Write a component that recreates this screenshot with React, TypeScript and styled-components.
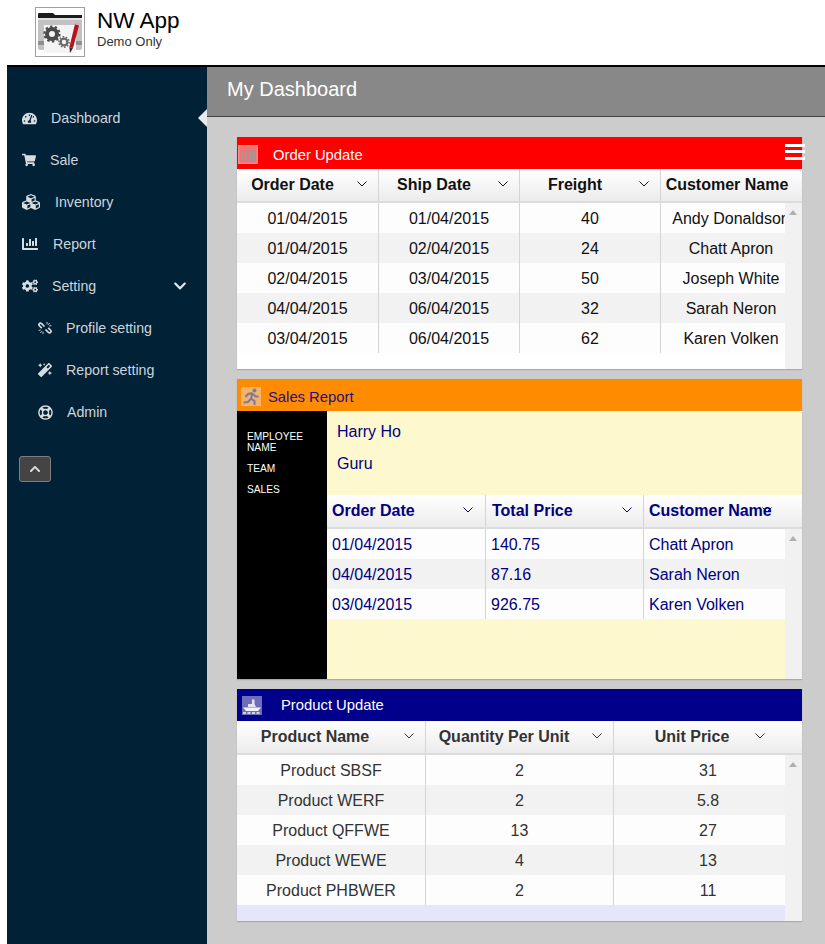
import { FC, ReactNode } from "react"
import styled, { createGlobalStyle } from "styled-components"
import { FaTachometerAlt, FaShoppingCart, FaCubes, FaChartBar, FaCogs, FaChevronDown, FaChevronUp, FaMagic, FaRegLifeRing } from "react-icons/fa"

const GlobalStyle = createGlobalStyle`
  html, body {
    margin: 0;
    padding: 0;
    background: #fff;
    font-family: "Liberation Sans", Arial, sans-serif;
  }
  * { box-sizing: border-box; }
`

const Page = styled.div`
  width: 825px;
  height: 944px;
  overflow: hidden;
`

const Header = styled.header`
  height: 67px;
  margin-left: 7px;
  padding: 7px 0 0 28px;
  display: flex;
  gap: 12px;
  border-bottom: 2px solid #000;
`

const LogoBox = styled.div`
  width: 50px;
  height: 50px;
  border: 1px solid #a0a0a0;
`

const Brand = styled.div`
  display: flex;
  flex-direction: column;
  padding-top: 2px;
`

const BrandName = styled.div`
  font-size: 22.5px;
  line-height: 24px;
  color: #000;
`

const BrandSub = styled.div`
  font-size: 13px;
  line-height: 18px;
  color: #333;
`

const Body = styled.div`
  display: flex;
  margin-left: 7px;
  height: 877px;
`

const Sidebar = styled.nav`
  position: relative;
  width: 200px;
  flex: none;
  background: #012137;
  padding-top: 30px;
`

const NavRow = styled.div<{ $sub?: boolean; $gap: number }>`
  position: relative;
  height: 42px;
  display: flex;
  align-items: center;
  padding-left: ${({ $sub }) => ($sub ? 31 : 15)}px;
  gap: ${({ $gap }) => $gap}px;
  color: #cfd4d8;
  font-size: 14.2px;
`

const NavIcon = styled.span<{ $w: number }>`
  width: ${({ $w }) => $w}px;
  flex: none;
  display: flex;
  justify-content: center;
  font-size: ${({ $w }) => $w}px;
  color: #d8dcdf;
`

const NavCaret = styled.span`
  position: absolute;
  left: 166px;
  top: 14px;
  font-size: 14px;
  color: #e4e7e9;
  display: flex;
`

const ActiveNotch = styled.span`
  position: absolute;
  right: 0;
  top: 12px;
  width: 0;
  height: 0;
  border-top: 9px solid transparent;
  border-bottom: 9px solid transparent;
  border-right: 9px solid #e8eaec;
`

const CollapseButton = styled.button`
  margin: 23px 0 0 12px;
  width: 32px;
  height: 26px;
  padding: 0;
  background: #444;
  border: 1px solid #7f7f7f;
  border-radius: 3px;
  color: #ddd;
  font-size: 12px;
  display: flex;
  align-items: center;
  justify-content: center;
`

const Main = styled.main`
  flex: 1;
  background: #ccc;
  min-width: 0;
`

const TitleBar = styled.div`
  height: 50px;
  background: #888;
  border-bottom: 1px solid #444;
  padding-left: 20px;
  color: #fff;
  font-size: 20px;
  line-height: 44px;
`

const Content = styled.div`
  padding: 20px 23px 0 30px;
  display: flex;
  flex-direction: column;
  gap: 10px;
`

const Card = styled.section<{ $h: number }>`
  height: ${({ $h }) => $h}px;
  background: #fff;
  display: flex;
  flex-direction: column;
  box-shadow: 0 1px 1px #aaa;
`

const CardHead = styled.div<{ $bg: string; $fg: string; $pad: number; $gap: number; $top: number }>`
  position: relative;
  height: 32px;
  flex: none;
  display: flex;
  align-items: center;
  gap: ${({ $gap }) => $gap}px;
  padding: ${({ $top }) => $top}px 0 0 ${({ $pad }) => $pad}px;
  background: ${({ $bg }) => $bg};
  color: ${({ $fg }) => $fg};
  font-size: 14.8px;
`

const Burger = styled.span`
  position: absolute;
  right: -3px;
  top: 7px;
  width: 20px;
  height: 16px;
  border-top: 3px solid #fff;
  border-bottom: 3px solid #fff;
  &::before {
    content: "";
    display: block;
    height: 3px;
    margin-top: 3px;
    background: #fff;
  }
`

const GridWrap = styled.div<{ $color: string; $fill: string }>`
  position: relative;
  flex: 1;
  min-height: 0;
  display: flex;
  flex-direction: column;
  color: ${({ $color }) => $color};
  background: ${({ $fill }) => $fill};
`

const HeadRow = styled.div<{ $cols: string }>`
  height: 34px;
  flex: none;
  display: grid;
  grid-template-columns: ${({ $cols }) => $cols};
  background: linear-gradient(#fff, #ececec);
  border-bottom: 2px solid #dcdcdc;
`

const HeadCell = styled.div<{ $align: string; $pl: number; $pr: number }>`
  position: relative;
  height: 32px;
  line-height: 32px;
  font-size: 16px;
  font-weight: bold;
  text-align: ${({ $align }) => $align};
  white-space: nowrap;
  padding: 0 ${({ $pr }) => $pr}px 0 ${({ $pl }) => $pl}px;
  border-right: 1px solid #d4d4d4;
  &:last-child { border-right: none; }
`

const Caret = styled.svg<{ $right: number }>`
  position: absolute;
  right: ${({ $right }) => $right}px;
  top: 12px;
  width: 10px;
  height: 6px;
`

const Rows = styled.div`
  flex: 1;
  min-height: 0;
  display: flex;
  flex-direction: column;
  margin-right: 17px;
  overflow: hidden;
`

const Row = styled.div<{ $cols: string; $odd: boolean }>`
  height: 30px;
  flex: none;
  display: grid;
  grid-template-columns: ${({ $cols }) => $cols};
  background: ${({ $odd }) => ($odd ? "#f2f2f2" : "#fdfdfd")};
`

const Cell = styled.div<{ $align: string }>`
  height: 30px;
  line-height: 32px;
  font-size: 16px;
  text-align: ${({ $align }) => $align};
  white-space: nowrap;
  overflow: hidden;
  padding: 0 ${({ $align }) => ($align === "left" ? 5 : 0)}px;
  border-right: 1px solid #d4d4d4;
  &:last-child { border-right: none; }
`

const Scrollbar = styled.div`
  position: absolute;
  right: 0;
  top: 34px;
  bottom: 0;
  width: 17px;
  background: #f1f1f1;
  &::before {
    content: "";
    position: absolute;
    left: 4px;
    top: 7px;
    border-left: 4px solid transparent;
    border-right: 4px solid transparent;
    border-bottom: 5px solid #b0b0b0;
  }
`

const SalesBody = styled.div`
  flex: 1;
  min-height: 0;
  display: flex;
`

const LabelColumn = styled.div`
  width: 90px;
  flex: none;
  background: #000;
  color: #fff;
  font-size: 10.2px;
  padding: 20px 10px 0;
`

const LabelItem = styled.div`
  line-height: 11px;
  margin-bottom: 10px;
`

const SalesMain = styled.div`
  flex: 1;
  min-width: 0;
  display: flex;
  flex-direction: column;
  background: #fef8ce;
`

const Facts = styled.div`
  height: 84px;
  flex: none;
  padding: 5px 10px 0;
  color: #000080;
  font-size: 16px;
`

const Fact = styled.div`
  height: 32px;
  line-height: 32px;
`

const SmallIcon = styled.svg`
  width: 20px;
  height: 19px;
  flex: none;
  display: block;
`

interface HeadDef {
  label: string
  caret?: number
  pl?: number
  pr?: number
}

interface GridProps {
  cols: string
  rowCols: string
  heads: HeadDef[]
  rows: string[][]
  align: string
  color: string
  fill: string
}

const Grid: FC<GridProps> = ({ cols, rowCols, heads, rows, align, color, fill }) => (
  <GridWrap $color={color} $fill={fill}>
    <HeadRow $cols={cols}>
      {heads.map((h) => (
        <HeadCell key={h.label} $align={align} $pl={h.pl ?? 5} $pr={h.pr ?? 5}>
          {h.label}
          {h.caret !== undefined && (
            <Caret $right={h.caret} viewBox="0 0 10 6">
              <path d="M0.5 0.5 L5 5 L9.5 0.5" fill="none" stroke="currentColor" strokeWidth="1" />
            </Caret>
          )}
        </HeadCell>
      ))}
    </HeadRow>
    <Rows>
      {rows.map((r, i) => (
        <Row key={r[0] + i} $cols={rowCols} $odd={i % 2 === 1}>
          {r.map((c, j) => (
            <Cell key={j} $align={align}>
              {c}
            </Cell>
          ))}
        </Row>
      ))}
    </Rows>
    <Scrollbar />
  </GridWrap>
)

const LogoIcon = () => (
  <svg width="48" height="48" viewBox="0 0 48 48">
    <path d="M2 10 L2 6 Q2 5 3 5 L17 5 L19 7 L46 7 L46 10 Z" fill="#1c1c1c" />
    <rect x="2" y="10" width="44" height="32" rx="2" fill="#c2c2c2" />
    <rect x="2" y="10" width="44" height="2" fill="#e2e2e2" />
    <rect x="8" y="17" width="32" height="28" fill="#f4f4f4" />
    <rect x="2" y="33" width="6" height="4" fill="#8f8f8f" />
    <rect x="40" y="33" width="6" height="4" fill="#8f8f8f" />
    <circle cx="16" cy="26" r="5" fill="none" stroke="#4a4a4a" strokeWidth="4" />
    <circle cx="16" cy="26" r="7.6" fill="none" stroke="#4a4a4a" strokeWidth="2" strokeDasharray="2.4 2.4" />
    <circle cx="28" cy="34" r="3.4" fill="none" stroke="#6a6a6a" strokeWidth="2.4" />
    <circle cx="28" cy="34" r="5.2" fill="none" stroke="#6a6a6a" strokeWidth="1.4" strokeDasharray="1.6 1.6" />
    <path d="M39 16 L43 17.4 L37 40 L33.4 39 Z" fill="#b3141d" />
    <path d="M39.4 14.4 L43.6 15.6 L43 17.6 L38.8 16.2 Z" fill="#e8a3b4" />
    <path d="M33.4 39 L37 40 L34 45 Z" fill="#2a2a2a" />
  </svg>
)

const ChainIcon = () => (
  <svg width="14" height="14" viewBox="0 0 14 14" fill="none" stroke="#d8dcdf">
    <path d="M6.5 5.5 L3.6 2.6 Q2.4 1.5 1.4 2.6 Q0.4 3.8 1.6 5 L3.8 7.2" strokeWidth="1.7" />
    <path d="M7.5 8.5 L10.4 11.4 Q11.6 12.5 12.6 11.4 Q13.6 10.2 12.4 9 L10.2 6.8" strokeWidth="1.7" />
    <path d="M9 1 L9 3.4 M11.6 2 L10.2 3.8 M13.4 4.6 L11.2 5 M5 13 L5 10.6 M2.4 12 L3.8 10.2 M0.6 9.4 L2.8 9" strokeWidth="0.9" />
  </svg>
)

const BarcodeIcon = () => (
  <SmallIcon viewBox="0 0 20 19">
    <rect width="20" height="19" fill="#f98a8a" />
    <rect x="1.5" y="1.5" width="17" height="16" fill="#f57070" />
    <path d="M3 16 L3 8 L6 4 L6 16 Z M7 16 L7 4 L9 4 L9 16 Z M11 16 L11 4 L13 4 L13 16 Z M14 16 L14 4 L17 8 L17 16 Z" fill="#a99393" />
  </SmallIcon>
)

const RunnerIcon = () => (
  <SmallIcon viewBox="0 0 20 19">
    <rect width="20" height="19" fill="#f5b36a" />
    <circle cx="13.5" cy="3.5" r="2" fill="#7d7a98" />
    <path d="M11.5 6 L7 7 L4.5 10 M11.5 6 L10 11.5 L13.5 14 L13.5 18 M10 11.5 L7 15 L2.5 15.5 M12 7 L14.5 9.5 L17.5 9.5" fill="none" stroke="#7d7a98" strokeWidth="2" />
  </SmallIcon>
)

const ShipIcon = () => (
  <SmallIcon viewBox="0 0 20 19">
    <rect width="20" height="19" fill="#6d6dbc" />
    <path d="M1 11.5 L19 11.5 L16 15 L4 15 Z" fill="#f2f2fa" />
    <path d="M6 11 L6 8 L10 8 L10 3.5 L12.5 3.5 L12.5 8 L14 11 Z" fill="#e4e4f4" />
    <path d="M1 17 L19 17" stroke="#f2f2fa" strokeWidth="1.4" strokeDasharray="3 1.5" />
  </SmallIcon>
)

const NAV: { label: string; icon: ReactNode; w: number; gap: number; sub?: boolean; caret?: boolean; active?: boolean }[] = [
  { label: "Dashboard", icon: <FaTachometerAlt />, w: 15, gap: 14, active: true },
  { label: "Sale", icon: <FaShoppingCart />, w: 14, gap: 14 },
  { label: "Inventory", icon: <FaCubes />, w: 18, gap: 15 },
  { label: "Report", icon: <FaChartBar />, w: 16, gap: 15 },
  { label: "Setting", icon: <FaCogs />, w: 16, gap: 14, caret: true },
  { label: "Profile setting", icon: <ChainIcon />, w: 14, gap: 14, sub: true },
  { label: "Report setting", icon: <FaMagic />, w: 14, gap: 14, sub: true },
  { label: "Admin", icon: <FaRegLifeRing />, w: 15, gap: 14, sub: true },
]

const App: FC = () => (
  <Page>
    <GlobalStyle />
    <Header>
      <LogoBox>
        <LogoIcon />
      </LogoBox>
      <Brand>
        <BrandName>NW App</BrandName>
        <BrandSub>Demo Only</BrandSub>
      </Brand>
    </Header>
    <Body>
      <Sidebar>
        {NAV.map((n) => (
          <NavRow key={n.label} $sub={n.sub} $gap={n.gap}>
            <NavIcon $w={n.w}>{n.icon}</NavIcon>
            {n.label}
            {n.caret && (
              <NavCaret>
                <FaChevronDown />
              </NavCaret>
            )}
            {n.active && <ActiveNotch />}
          </NavRow>
        ))}
        <CollapseButton>
          <FaChevronUp />
        </CollapseButton>
      </Sidebar>
      <Main>
        <TitleBar>My Dashboard</TitleBar>
        <Content>
          <Card $h={232}>
            <CardHead $bg="#ff0000" $fg="#fff" $pad={1} $gap={15} $top={3}>
              <BarcodeIcon />
              Order Update
              <Burger />
            </CardHead>
            <Grid
              cols="142px 141px 141px 141px"
              rowCols="142px 141px 141px 140px"
              align="center"
              color="#111"
              fill="#fff"
              heads={[
                { label: "Order Date", caret: 11, pl: 0, pr: 30 },
                { label: "Ship Date", caret: 11, pl: 0, pr: 30 },
                { label: "Freight", caret: 11, pl: 0, pr: 30 },
                { label: "Customer Name", pl: 0, pr: 9 },
              ]}
              rows={[
                ["01/04/2015", "01/04/2015", "40", "Andy Donaldson"],
                ["01/04/2015", "02/04/2015", "24", "Chatt Apron"],
                ["02/04/2015", "03/04/2015", "50", "Joseph White"],
                ["04/04/2015", "06/04/2015", "32", "Sarah Neron"],
                ["03/04/2015", "06/04/2015", "62", "Karen Volken"],
              ]}
            />
          </Card>
          <Card $h={300}>
            <CardHead $bg="#ff8c00" $fg="#1d0f88" $pad={4} $gap={7} $top={3}>
              <RunnerIcon />
              Sales Report
            </CardHead>
            <SalesBody>
              <LabelColumn>
                <LabelItem>EMPLOYEE NAME</LabelItem>
                <LabelItem>TEAM</LabelItem>
                <LabelItem>SALES</LabelItem>
              </LabelColumn>
              <SalesMain>
                <Facts>
                  <Fact>Harry Ho</Fact>
                  <Fact>Guru</Fact>
                </Facts>
                <Grid
                  cols="159px 158px 158px"
                  rowCols="159px 158px 158px"
                  align="left"
                  color="#000080"
                  fill="transparent"
                  heads={[
                    { label: "Order Date", caret: 12 },
                    { label: "Total Price", caret: 11, pl: 6 },
                    { label: "Customer Name", caret: 30 },
                  ]}
                  rows={[
                    ["01/04/2015", "140.75", "Chatt Apron"],
                    ["04/04/2015", "87.16", "Sarah Neron"],
                    ["03/04/2015", "926.75", "Karen Volken"],
                  ]}
                />
              </SalesMain>
            </SalesBody>
          </Card>
          <Card $h={232}>
            <CardHead $bg="#00008b" $fg="#fff" $pad={5} $gap={19} $top={0}>
              <ShipIcon />
              Product Update
            </CardHead>
            <Grid
              cols="189px 188px 188px"
              rowCols="189px 188px 188px"
              align="center"
              color="#333"
              fill="#e6e6fa"
              heads={[
                { label: "Product Name", caret: 11, pl: 0, pr: 32 },
                { label: "Quantity Per Unit", caret: 11, pl: 0, pr: 31 },
                { label: "Unit Price", caret: 37, pl: 0, pr: 32 },
              ]}
              rows={[
                ["Product SBSF", "2", "31"],
                ["Product WERF", "2", "5.8"],
                ["Product QFFWE", "13", "27"],
                ["Product WEWE", "4", "13"],
                ["Product PHBWER", "2", "11"],
              ]}
            />
          </Card>
        </Content>
      </Main>
    </Body>
  </Page>
)

export default App
